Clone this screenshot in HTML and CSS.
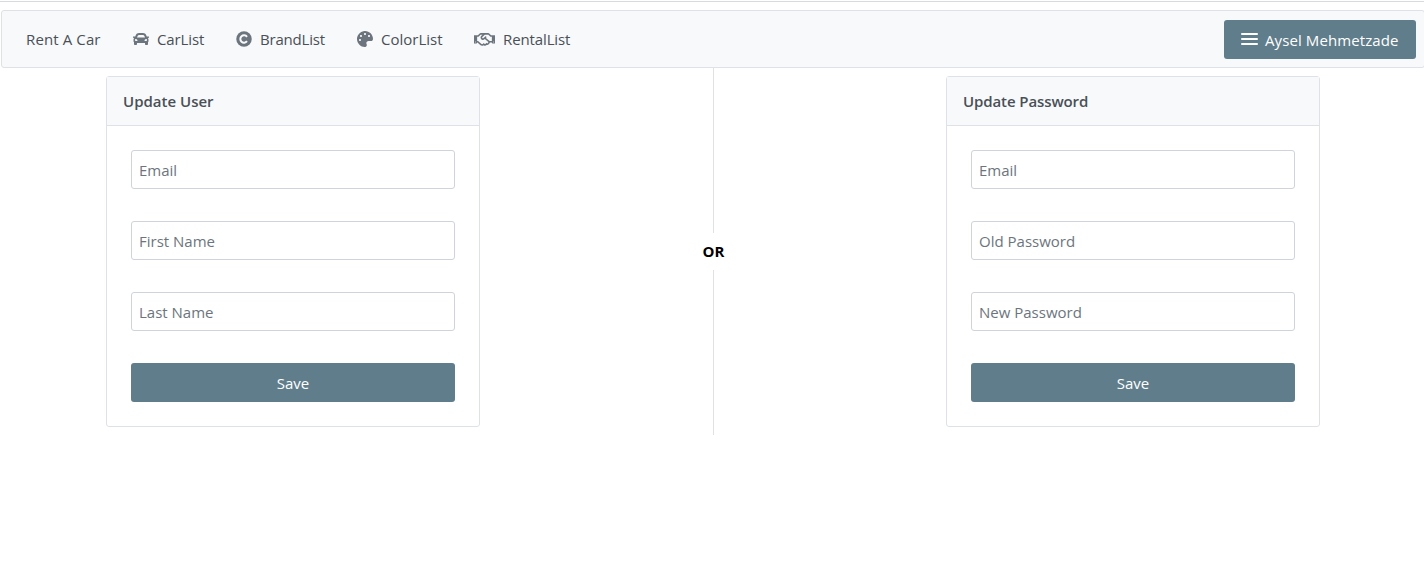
FILE: index.html
```html
<!DOCTYPE html>
<html lang="en">
<head>
<meta charset="utf-8">
<title>Rent A Car</title>
<link rel="stylesheet" href="styles.css">
</head>
<body>
<header class="top">
  <nav class="menubar">
    <a class="item brand"><span class="label">Rent A Car</span></a>
    <a class="item car"><svg class="icon" width="16" height="16" viewBox="0 0 512 512"><path d="M499.99 176h-59.87l-16.64-41.6C406.38 91.63 365.57 64 319.5 64h-127c-46.06 0-86.88 27.63-103.99 70.4L71.87 176H12.01C4.2 176-1.53 183.34.37 190.91l6 24C7.7 220.25 12.5 224 18.01 224h20.07C24.65 235.73 16 252.78 16 272v48c0 16.12 6.16 30.67 16 41.93V416c0 17.67 14.33 32 32 32h32c17.67 0 32-14.33 32-32v-32h256v32c0 17.67 14.33 32 32 32h32c17.67 0 32-14.33 32-32v-54.07c9.84-11.25 16-25.8 16-41.93v-48c0-19.22-8.65-36.27-22.07-48H494c5.51 0 10.31-3.75 11.64-9.09l6-24c1.89-7.57-3.84-14.91-11.65-14.91zm-352.06-17.83c7.29-18.22 24.94-30.17 44.57-30.17h127c19.63 0 37.28 11.95 44.57 30.17L384 208H128l19.93-49.83zM96 319.8c-19.2 0-32-12.76-32-31.9S76.8 256 96 256s48 28.71 48 47.85-28.8 15.95-48 15.95zm320 0c-19.2 0-48 3.19-48-15.95S396.8 256 416 256s32 12.76 32 31.9-12.8 31.9-32 31.9z"/></svg><span class="label">CarList</span></a>
    <a class="item brands"><svg class="icon" width="16" height="16" viewBox="0 0 16 16"><circle cx="8" cy="8" r="7.75"/><path class="letter" d="M11 10.2A3.7 3.7 0 1 1 11 5.8"/></svg><span class="label">BrandList</span></a>
    <a class="item colors"><svg class="icon" width="16" height="16" viewBox="0 0 512 512"><path d="M204.3 5C104.9 24.4 24.8 104.3 5.2 203.4c-37 187 131.7 326.4 258.8 306.7 41.2-6.4 61.4-54.6 42.5-91.7-23.1-45.4 9.9-98.4 60.9-98.4h79.7c35.8 0 64.8-29.6 64.9-65.3C511.5 97.1 368.1-26.9 204.3 5zM96 320c-17.7 0-32-14.3-32-32s14.3-32 32-32 32 14.3 32 32-14.3 32-32 32zm32-128c-17.7 0-32-14.3-32-32s14.3-32 32-32 32 14.3 32 32-14.3 32-32 32zm128-64c-17.7 0-32-14.3-32-32s14.3-32 32-32 32 14.3 32 32-14.3 32-32 32zm128 64c-17.7 0-32-14.3-32-32s14.3-32 32-32 32 14.3 32 32-14.3 32-32 32z"/></svg><span class="label">ColorList</span></a>
    <a class="item rentals"><svg class="icon" width="21" height="16.8" viewBox="0 0 640 512"><path d="M519.2 127.9l-47.6-47.6A56.252 56.252 0 0 0 432 64H205.2c-14.8 0-29.1 5.9-39.6 16.3L118 127.9H0v255.7h64c17.6 0 31.8-14.2 31.9-31.7h9.1l84.6 76.4c30.9 25.1 73.8 25.7 105.6 3.8 12.5 10.8 26 15.9 41.1 15.9 18.2 0 35.3-7.4 48.8-24 22.1 8.7 48.2 2.6 64-16.8l26.2-32.3c5.6-6.9 9.1-14.8 10.9-23h57.9c.1 17.5 14.4 31.7 31.9 31.7h64V127.9H519.2zM48 351.6c-8.8 0-16-7.2-16-16s7.2-16 16-16 16 7.2 16 16c0 8.9-7.2 16-16 16zm390-6.9l-26.1 32.2c-2.8 3.4-7.8 4-11.3 1.2l-23.9-19.4-30 36.5c-6 7.3-15 4.8-18 2.4l-36.8-31.5-15.6 19.2c-13.9 17.1-39.2 19.7-55.3 6.6l-97.3-88H96V175.8h41.9l61.7-61.6c2-.8 3.7-1.5 5.7-2.3H262l-38.7 35.5c-29.4 26.9-31.1 72.3-4.4 101.3 14.8 16.2 61.2 41.2 101.5 4.4l8.2-7.5 108.2 87.8c3.4 2.8 3.9 7.9 1.2 11.3zm106-40.8h-69.2c-2.3-2.8-4.9-5.4-7.7-7.7l-102.7-83.4 12.5-11.4c6.5-6 7-16.1 1-22.6L367 167.1c-6-6.5-16.1-6.9-22.6-1l-55.2 50.6c-9.5 8.7-25.7 9.4-34.6 0-9.3-9.9-8.5-25.1 1.2-33.9l65.6-60.1c7.4-6.8 17-10.5 27-10.5l83.7-.2c2.1 0 4.1.8 5.5 2.3l61.7 61.6H544v128zm48 47.7c-8.8 0-16-7.2-16-16s7.2-16 16-16 16 7.2 16 16c0 8.9-7.2 16-16 16z"/></svg><span class="label">RentalList</span></a>
    <button class="button account"><svg class="bars" width="17" height="12" viewBox="0 0 17 12"><path d="M.9 1h15.2M.9 6h15.2M.9 11h15.2"/></svg><span class="name">Aysel Mehmetzade</span></button>
  </nav>
</header>
<main class="forms">
  <section class="side">
    <form class="card">
      <h2 class="title">Update User</h2>
      <div class="fields">
        <input class="field" type="text" placeholder="Email">
        <input class="field" type="text" placeholder="First Name">
        <input class="field" type="text" placeholder="Last Name">
        <button class="button save" type="button">Save</button>
      </div>
    </form>
  </section>
  <div class="divider"><b class="or">OR</b></div>
  <section class="side">
    <form class="card">
      <h2 class="title">Update Password</h2>
      <div class="fields">
        <input class="field" type="text" placeholder="Email">
        <input class="field" type="password" placeholder="Old Password">
        <input class="field" type="password" placeholder="New Password">
        <button class="button save" type="button">Save</button>
      </div>
    </form>
  </section>
</main>
</body>
</html>
```
FILE: styles.css
```css
* { box-sizing: border-box; }
body {
  margin: 0;
  padding-top: 1px;
  overflow: hidden;
  background: #fff;
  color: #495057;
  font: 15px/22px "Open Sans", "Noto Sans", sans-serif;
}
.top { border-top: 1px solid #d9dadb; padding: 8px 0 0 1px; }
.menubar {
  display: flex;
  align-items: center;
  height: 58px;
  margin-right: -1px;
  padding: 0 8px;
  border: 1px solid #dee2e6;
  border-radius: 3px;
  background: #f8f9fa;
}
.item { display: flex; align-items: center; gap: 8px; padding: 0 16px; white-space: nowrap; letter-spacing: -0.12px; }
.icon { flex: none; fill: #6c757d; }
.letter { fill: none; stroke: #f8f9fa; stroke-width: 2; }
.brand { width: 107px; letter-spacing: 0.12px; }
.car { width: 103px; }
.brands { width: 121px; letter-spacing: -0.2px; }
.colors { width: 117px; letter-spacing: 0; }
.button {
  height: 39px;
  border: 0;
  border-radius: 3px;
  background: #607d8b;
  color: #fff;
  font: inherit;
}
.account {
  display: flex;
  align-items: center;
  gap: 7px;
  width: 192px;
  margin-left: auto;
  padding: 0 15px 0 17px;
  white-space: nowrap;
  letter-spacing: 0.1px;
}
.name { padding-top: 2px; }
.bars { flex: none; fill: none; stroke: #fff; stroke-width: 1.8; stroke-linecap: round; }
.forms {
  display: grid;
  grid-template-columns: 1fr 25px 1fr;
  height: 367px;
  padding-left: 3px;
}
.side { padding: 8px 0 0 103px; }
.side:last-child { padding-left: 220px; }
.card { width: 374px; height: 351px; border: 1px solid #dee2e6; border-radius: 3px; }
.title {
  margin: 0;
  padding: 13px 16px 12px;
  border-bottom: 1px solid #dee2e6;
  background: #f8f9fa;
  font-size: 15px;
  font-weight: 600;
  line-height: 23px;
}
.side:last-child .title { letter-spacing: -0.1px; }
.fields { display: flex; flex-direction: column; gap: 32px; padding: 24px; }
.field {
  height: 39px;
  padding: 0 7px;
  border: 1px solid #ced4da;
  border-radius: 3px;
  font: inherit;
}
.field::placeholder { color: #6c757d; opacity: 1; }
.save { padding: 0; }
.divider { display: flex; flex-direction: column; align-items: center; }
.divider::before, .divider::after { content: ""; flex: 1; width: 1px; background: #dee2e6; }
.or { height: 37px; color: #000; font-size: 15px; line-height: 37px; }
```
